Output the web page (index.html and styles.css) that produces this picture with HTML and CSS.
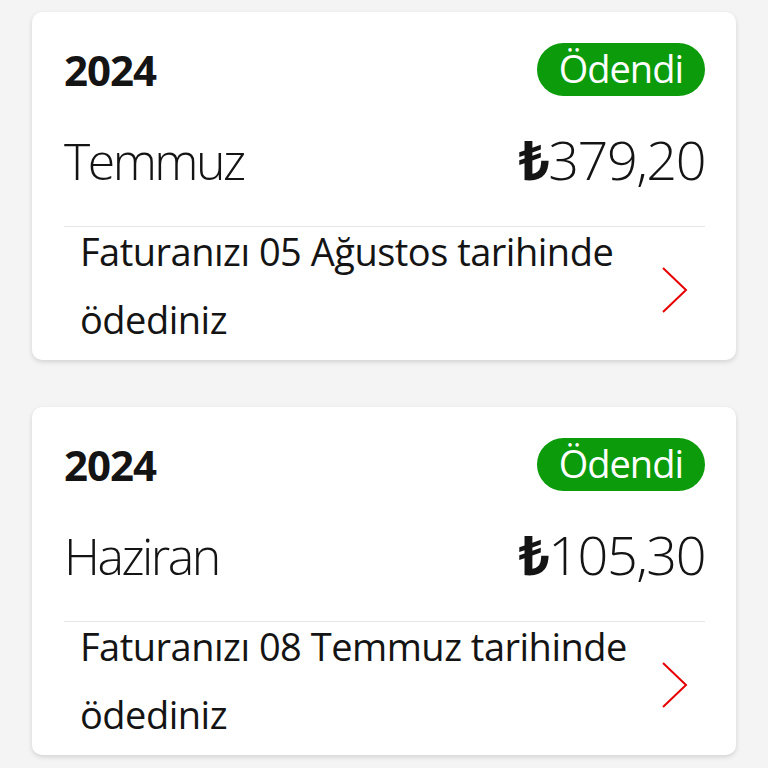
FILE: index.html
```html
<!DOCTYPE html>
<html lang="tr">
<head>
    <meta charset="UTF-8">
    <meta name="viewport" content="width=device-width, initial-scale=1.0">
    <title>Faturalarım</title>
    <link rel="stylesheet" href="styles.css">
</head>
<body>
    <div class="bill-list">
        <div class="bill-card">
            <div class="bill-head">
                <span class="bill-year">2024</span>
                <span class="status-badge">Ödendi</span>
            </div>
            <div class="bill-main">
                <span class="bill-month">Temmuz</span>
                <span class="bill-amount"><b class="lira">₺</b>379,20</span>
            </div>
            <div class="bill-foot">
                <p class="bill-note">Faturanızı 05 Ağustos tarihinde ödediniz</p>
                <svg class="chevron" width="28" height="48" viewBox="0 0 28 48">
                    <polyline points="2,2 25,24 2,46" fill="none" stroke="#e60000" stroke-width="2"/>
                </svg>
            </div>
        </div>

        <div class="bill-card">
            <div class="bill-head">
                <span class="bill-year">2024</span>
                <span class="status-badge">Ödendi</span>
            </div>
            <div class="bill-main">
                <span class="bill-month">Haziran</span>
                <span class="bill-amount"><b class="lira">₺</b>105,30</span>
            </div>
            <div class="bill-foot">
                <p class="bill-note">Faturanızı 08 Temmuz tarihinde ödediniz</p>
                <svg class="chevron" width="28" height="48" viewBox="0 0 28 48">
                    <polyline points="2,2 25,24 2,46" fill="none" stroke="#e60000" stroke-width="2"/>
                </svg>
            </div>
        </div>
    </div>
</body>
</html>
```

FILE: styles.css
```css
/* Global Styles */
body {
    font-family: 'Open Sans', 'Noto Sans', sans-serif;
    background: #f4f4f4;
    color: #141414;
    margin: 0;
    padding: 0;
}

.bill-list {
    padding: 12px 32px;
    display: flex;
    flex-direction: column;
    gap: 47px;
}

.bill-card {
    background: #fff;
    border-radius: 10px;
    box-shadow: 0 2px 5px rgba(0, 0, 0, 0.14);
    padding: 31px 31px 0 32px;
}

.bill-head {
    display: flex;
    justify-content: space-between;
    align-items: center;
    height: 53px;
}

.bill-year {
    font-size: 42px;
    font-weight: 700;
    letter-spacing: -1px;
}

.status-badge {
    background: #0b9b0b;
    color: #fff;
    height: 53px;
    line-height: 51px;
    padding: 0 22px;
    border-radius: 27px;
    font-size: 38px;
    letter-spacing: -1px;
}

.bill-main {
    display: flex;
    justify-content: space-between;
    align-items: baseline;
    margin-top: 26px;
    padding-bottom: 30px;
    border-bottom: 1px solid #e6e6e6;
}

.bill-month {
    font-size: 50px;
    font-weight: 300;
    letter-spacing: -2.5px;
}

.bill-amount {
    font-size: 54px;
    font-weight: 300;
    letter-spacing: -1.5px;
}

.lira {
    font-weight: 700;
}

.bill-foot {
    display: flex;
    align-items: center;
    justify-content: space-between;
    padding: 0 16px;
}

.bill-note {
    margin: -10px 0 7px;
    font-size: 38px;
    line-height: 68px;
    letter-spacing: -0.5px;
    max-width: 560px;
}

.chevron {
    flex-shrink: 0;
    margin-top: -8px;
}
```
